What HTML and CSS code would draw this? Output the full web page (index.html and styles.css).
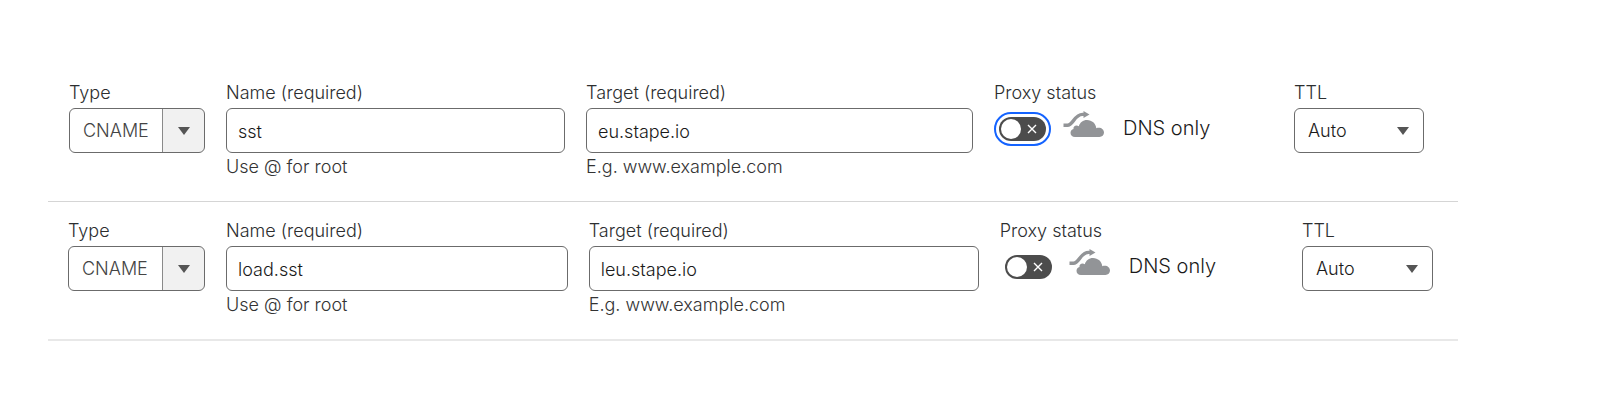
FILE: index.html
```html
<!DOCTYPE html>
<html lang="en">
<head>
<meta charset="utf-8">
<meta name="viewport" content="width=device-width, initial-scale=1">
<title>DNS records</title>
<link rel="stylesheet" href="styles.css">
</head>
<body>
<svg width="0" height="0" class="sprite" aria-hidden="true">
  <symbol id="arrow" viewBox="0 0 12 8"><path d="M0 0h12L6 8z"/></symbol>
  <symbol id="cross" viewBox="0 0 10 10"><path d="M1 1l8 8M9 1l-8 8" fill="none" stroke="#fff" stroke-width="1.4"/></symbol>
  <symbol id="cloud" viewBox="0 0 42 27">
    <path d="M0.500 14.300H4.500C10 14.300 11.500 3.400 19.500 3.400H22" fill="none" stroke="currentColor" stroke-width="3.400"/>
    <path d="M20.500 0L26.500 3.500L20.500 7z"/>
    <path d="M12 26C9.200 26 7.500 24.200 7.500 21.800C7.500 19.600 8.800 18.200 10.500 17.900C10 15.400 13 13.600 15.800 15.200C17 11.400 20 9 24 9C29 9 32.800 12.600 33.300 17.200C37.500 15.800 41 18.200 41 21.600C41 24.300 39 26 36.500 26z"/>
  </symbol>
</svg>
<main class="records">
  <form class="record record-first">
    <div class="field">
      <label for="type1">Type</label>
      <div class="picker picker-split">
        <select id="type1"><option>CNAME</option></select>
        <svg class="arrow"><use href="#arrow"/></svg>
      </div>
    </div>
    <div class="field">
      <label for="name1">Name (required)</label>
      <input class="text" id="name1" type="text" value="sst" aria-describedby="name1-hint">
      <p class="hint" id="name1-hint">Use @ for root</p>
    </div>
    <div class="field">
      <label for="target1">Target (required)</label>
      <input class="text" id="target1" type="text" value="eu.stape.io" aria-describedby="target1-hint">
      <p class="hint" id="target1-hint">E.g. www.example.com</p>
    </div>
    <div class="field">
      <label for="proxy1">Proxy status</label>
      <div class="proxy">
        <span class="switch switch-focused">
          <input id="proxy1" type="checkbox" role="switch">
          <svg class="cross"><use href="#cross"/></svg>
        </span>
        <svg class="cloud"><use href="#cloud"/></svg>
        <span class="status">DNS only</span>
      </div>
    </div>
    <div class="field">
      <label for="ttl1">TTL</label>
      <div class="picker">
        <select id="ttl1"><option>Auto</option></select>
        <svg class="arrow"><use href="#arrow"/></svg>
      </div>
    </div>
  </form>
  <form class="record record-last">
    <div class="field">
      <label for="type2">Type</label>
      <div class="picker picker-split">
        <select id="type2"><option>CNAME</option></select>
        <svg class="arrow"><use href="#arrow"/></svg>
      </div>
    </div>
    <div class="field">
      <label for="name2">Name (required)</label>
      <input class="text" id="name2" type="text" value="load.sst" aria-describedby="name2-hint">
      <p class="hint" id="name2-hint">Use @ for root</p>
    </div>
    <div class="field">
      <label for="target2">Target (required)</label>
      <input class="text" id="target2" type="text" value="leu.stape.io" aria-describedby="target2-hint">
      <p class="hint" id="target2-hint">E.g. www.example.com</p>
    </div>
    <div class="field">
      <label for="proxy2">Proxy status</label>
      <div class="proxy">
        <span class="switch">
          <input id="proxy2" type="checkbox" role="switch">
          <svg class="cross"><use href="#cross"/></svg>
        </span>
        <svg class="cloud"><use href="#cloud"/></svg>
        <span class="status">DNS only</span>
      </div>
    </div>
    <div class="field">
      <label for="ttl2">TTL</label>
      <div class="picker">
        <select id="ttl2"><option>Auto</option></select>
        <svg class="arrow"><use href="#arrow"/></svg>
      </div>
    </div>
  </form>
</main>
</body>
</html>
```
FILE: styles.css
```css
* {
  box-sizing: border-box;
}

body {
  margin: 0;
  background: #fff;
  color: #2c2e2f;
  font: 300 18px/24px Inter, "Liberation Sans", sans-serif;
}

.sprite {
  position: absolute;
}

.records {
  padding: 64px 142px 0 48px;
}

.record {
  display: grid;
  grid-template-columns: 136fr 339fr 387fr 279fr 130fr;
  gap: 21px;
  padding: 16px 34px 22px 21px;
  border-bottom: 1px solid #d5d5d5;
}

.record-last {
  padding-left: 20px;
  padding-right: 25px;
  border-bottom: 2px solid #e8e8e8;
}

.field {
  display: flex;
  flex-direction: column;
  min-width: 0;
}

.field label {
  padding-top: 1px;
  margin-bottom: 3px;
}

.text,
.picker select {
  width: 100%;
  height: 45px;
  margin: 0;
  border: 1px solid #6b6b6b;
  border-radius: 6px;
  background: #fff;
  color: #1a1a1a;
  font: inherit;
}

.text {
  padding: 1px 11px 0;
}

.hint {
  margin: 2px 0 0;
  color: #333;
}

.picker {
  position: relative;
}

.picker select {
  appearance: none;
  padding: 1px 40px 0 13px;
}

.picker-split select {
  color: #444;
  background: linear-gradient(to left, #f1f1f1 41px, #8a8a8a 41px, #8a8a8a 42px, #fff 42px);
}

.arrow {
  position: absolute;
  top: 19px;
  right: 15px;
  width: 12px;
  height: 8px;
  fill: #555;
  pointer-events: none;
}

.proxy {
  display: flex;
  align-items: center;
  height: 41px;
}

.switch {
  position: relative;
  display: flex;
  width: 47px;
  height: 24px;
  margin: 0 17px 0 5px;
  border-radius: 17px;
}

.switch-focused {
  outline: 2px solid #1463ff;
  outline-offset: 3px;
}

.switch input {
  appearance: none;
  display: flex;
  align-items: center;
  width: 100%;
  height: 100%;
  margin: 0;
  padding: 2px;
  border-radius: 12px;
  background: #4c4c4c;
}

.switch input::before {
  content: "";
  width: 20px;
  height: 20px;
  border-radius: 50%;
  background: #fff;
}

.cross {
  position: absolute;
  top: 7px;
  right: 9px;
  width: 10px;
  height: 10px;
  pointer-events: none;
}

.cloud {
  width: 42px;
  height: 27px;
  margin-right: 18px;
  margin-bottom: 9px;
  color: #929497;
  fill: #929497;
}

.status {
  margin-bottom: 2px;
  color: #1a1a1a;
  font-size: 20px;
}
```
